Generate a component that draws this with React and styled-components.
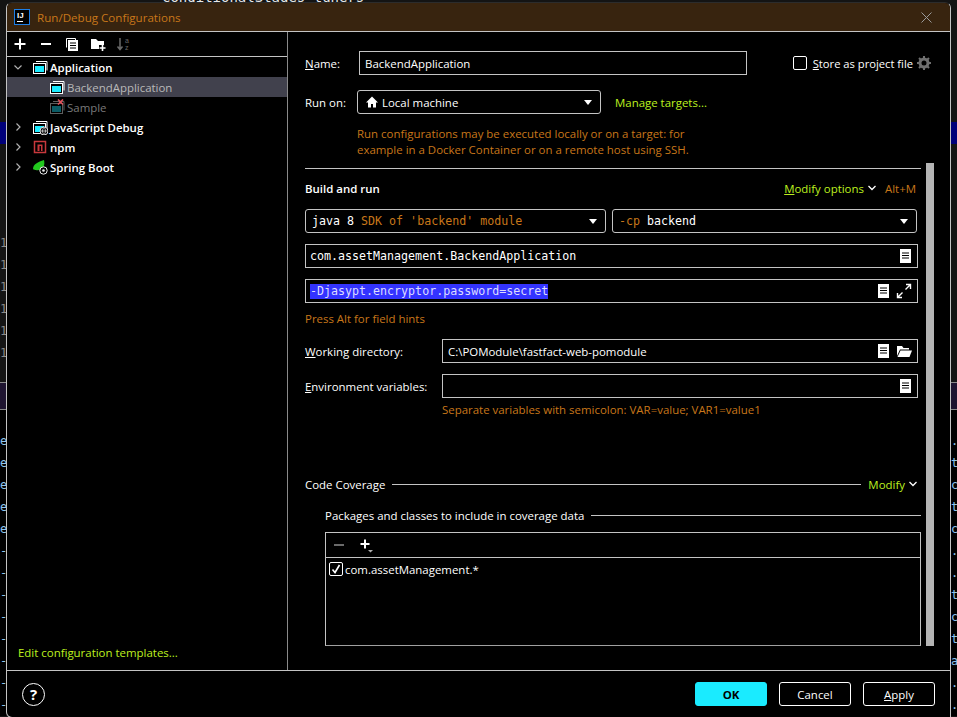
// App.jsx - Run/Debug Configurations dialog
import React from "react";
import styled, { createGlobalStyle } from "styled-components";

const colours = {
  orange: "#c8771a",
  green: "#bdf01f",
  cyan: "#1aebff",
  line: "#c4c4c4",
  dim: "#6f6f6f",
};

const GlobalStyle = createGlobalStyle`
  html, body {
    margin: 0;
    padding: 0;
    background: #000;
  }
  body {
    width: 957px;
    height: 717px;
    overflow: hidden;
    font-family: "Open Sans", "Liberation Sans", sans-serif;
    font-size: 11.45px;
    color: #fff;
  }
`;

const Screen = styled.div`
  position: relative;
  width: 957px;
  height: 717px;
  background: #141414;
  overflow: hidden;
`;

const Backdrop = styled.div`
  display: flex;
  justify-content: space-between;
  height: 100%;
`;

const EditorPeek = styled.div`
  position: absolute;
  left: 162px;
  top: -11px;
  font-family: "DejaVu Sans Mono", monospace;
  font-size: 14px;
  line-height: 16px;
  color: #e8e8e8;
`;

const Gutter = styled.div`
  width: 6px;
  height: 100%;
  display: flex;
  flex-direction: column;
  overflow: hidden;
  font-family: "DejaVu Sans Mono", monospace;
  font-size: 12px;
  color: #8fc4ee;
`;

const GutterSpacer = styled.div`
  height: ${(p) => p.$h}px;
  flex: none;
  background: ${(p) => p.$bg || "transparent"};
  border-top: ${(p) => (p.$rule ? "1px solid #8a8a8a" : "none")};
`;

const GutterLine = styled.div`
  height: 22px;
  line-height: 22px;
  flex: none;
  color: ${(p) => p.$color || "inherit"};
  background: ${(p) => p.$bg || "#000"};
  white-space: pre;
`;

const Dialog = styled.div`
  position: absolute;
  left: 6px;
  top: 2px;
  width: 945px;
  height: 716px;
  box-sizing: border-box;
  border: 1px solid ${colours.line};
  border-top: 1px solid #2c2c2c;
  border-radius: 6px 6px 0 6px;
  background: #000;
  display: flex;
  flex-direction: column;
  overflow: hidden;
`;

const TitleBar = styled.div`
  height: 29px;
  flex: none;
  box-sizing: border-box;
  display: flex;
  align-items: center;
  padding: 0 18px 0 7px;
  gap: 7px;
  background: #38240f;
  border-bottom: 1px solid ${colours.line};
  color: ${colours.orange};
  font-size: 11.6px;
`;

const TitleText = styled.span`
  flex: 1;
`;

const Body = styled.div`
  flex: 1;
  display: flex;
  min-height: 0;
`;

const Sidebar = styled.div`
  width: 281px;
  flex: none;
  box-sizing: border-box;
  border-right: 1px solid #8a8a8a;
  display: flex;
  flex-direction: column;
`;

const SideTools = styled.div`
  height: 25px;
  flex: none;
  box-sizing: border-box;
  display: flex;
  align-items: center;
  gap: 10px;
  padding: 0 5px;
  border-bottom: 1px solid ${colours.line};
`;

const ToolIcon = styled.svg`
  width: 16px;
  height: 16px;
  flex: none;
  display: block;
`;

const Tree = styled.div`
  flex: 1;
`;

const TreeRow = styled.div`
  height: 20px;
  display: flex;
  align-items: center;
  box-sizing: border-box;
  padding-left: ${(p) => (p.$child ? 42 : 5)}px;
  gap: 2px;
  background: ${(p) => (p.$selected ? "#41414d" : "transparent")};
  color: ${(p) => (p.$child ? (p.$faded ? "#7a7a7a" : "#b9b9b9") : "#fff")};
  font-weight: ${(p) => (p.$child ? 400 : 600)};
`;

const Chevron = styled.svg`
  width: 12px;
  height: 12px;
  flex: none;
  margin-right: 6px;
`;

const TreeIcon = styled.svg`
  width: 16px;
  height: 16px;
  flex: none;
`;

const TemplatesLink = styled.div`
  color: ${colours.green};
  padding: 0 0 10px 11px;
`;

const Main = styled.div`
  flex: 1;
  min-width: 0;
  box-sizing: border-box;
  padding-left: 17px;
  display: flex;
  flex-direction: column;
`;

const NameRow = styled.div`
  margin-top: 19px;
  height: 24px;
  display: flex;
  align-items: center;
`;

const RowLabel = styled.span`
  width: ${(p) => p.$width}px;
  flex: none;
`;

const Mnemonic = styled.span`
  text-decoration: underline;
`;

const Input = styled.div`
  width: ${(p) => p.$width}px;
  height: 24px;
  flex: none;
  box-sizing: border-box;
  display: flex;
  align-items: center;
  gap: 6px;
  padding: 0 5px 0 ${(p) => (p.$mono ? 4 : 5)}px;
  border: 1px solid ${colours.line};
  font-family: ${(p) => (p.$mono ? '"DejaVu Sans Mono", monospace' : "inherit")};
  font-size: ${(p) => (p.$mono ? "11.65px" : "11.45px")};
`;

const InputText = styled.span`
  flex: 1;
  white-space: nowrap;
`;

const Selected = styled.span`
  display: inline-block;
  line-height: 15px;
  background: #3333ff;
  color: #dcdcff;
`;

const StoreBox = styled.label`
  margin-left: auto;
  margin-right: 19px;
  display: flex;
  align-items: center;
  gap: 6px;
`;

const StoreLabel = styled.span`
  font-size: 11.2px;
`;

const GearIcon = styled.svg`
  width: 14px;
  height: 14px;
  flex: none;
  margin-left: -2px;
`;

const Checkbox = styled.span`
  width: 14px;
  height: 14px;
  flex: none;
  box-sizing: border-box;
  border: 1px solid #fff;
  border-radius: 2px;
  display: flex;
  align-items: center;
  justify-content: center;
`;

const RunRow = styled.div`
  margin-top: 15px;
  height: 24px;
  display: flex;
  align-items: center;
`;

const Select = styled.div`
  width: ${(p) => p.$width}px;
  height: 24px;
  flex: none;
  box-sizing: border-box;
  display: flex;
  align-items: center;
  gap: 3px;
  padding: 0 8px 0 ${(p) => p.$pad || 6}px;
  border: 1px solid ${colours.line};
  border-radius: 3px;
  font-family: ${(p) => (p.$mono ? '"DejaVu Sans Mono", monospace' : "inherit")};
  font-size: ${(p) => (p.$mono ? "11.65px" : "11.45px")};
`;

const Arrow = styled.span`
  margin-left: auto;
  width: 0;
  height: 0;
  border-left: 4px solid transparent;
  border-right: 4px solid transparent;
  border-top: 5px solid #fff;
`;

const Orange = styled.span`
  color: ${colours.orange};
`;

const GreenLink = styled.span`
  color: ${colours.green};
  margin-left: ${(p) => p.$left || 0}px;
`;

const HintBlock = styled.div`
  margin: 12px 0 0 52px;
  line-height: 16px;
  height: 37px;
  color: ${colours.orange};
`;

const ScrollArea = styled.div`
  height: 483px;
  flex: none;
  display: flex;
`;

const Form = styled.div`
  width: 616px;
  flex: none;
  padding-top: 5px;
`;

const Thumb = styled.div`
  width: 8px;
  margin-left: 5px;
  flex: none;
  background: #b4b4b4;
`;

const Rule = styled.div`
  height: 1px;
  background: ${colours.line};
`;

const BuildHead = styled.div`
  height: 24px;
  margin-top: 7px;
  display: flex;
  align-items: center;
  padding-right: 5px;
`;

const Strong = styled.span`
  font-weight: 600;
  margin-right: auto;
`;

const Caret = styled.svg`
  width: 10px;
  height: 10px;
  flex: none;
  margin: 0 ${(p) => p.$right || 0}px 0 ${(p) => p.$left || 0}px;
`;

const SelectRow = styled.div`
  margin-top: 9px;
  display: flex;
  gap: 6px;
`;

const FieldRow = styled.div`
  margin-top: ${(p) => p.$top}px;
  display: flex;
  align-items: center;
`;

const FieldHint = styled.div`
  height: 16px;
  line-height: 16px;
  margin-top: ${(p) => p.$top}px;
  margin-left: ${(p) => p.$left || 0}px;
  color: ${colours.orange};
`;

const SectionHead = styled.div`
  margin-top: ${(p) => p.$top}px;
  margin-left: ${(p) => p.$left || 0}px;
  padding-right: ${(p) => p.$right || 0}px;
  height: 16px;
  display: flex;
  align-items: center;
  gap: 7px;
`;

const SectionLine = styled.span`
  flex: 1;
  height: 1px;
  background: ${colours.line};
`;

const Table = styled.div`
  margin: 9px 0 0 20px;
  height: 114px;
  box-sizing: border-box;
  border: 1px solid ${colours.line};
  border-bottom-color: #a0a0a0;
`;

const TableTools = styled.div`
  height: 25px;
  box-sizing: border-box;
  display: flex;
  align-items: center;
  gap: 10px;
  padding-left: 5px;
  border-bottom: 1px solid ${colours.line};
`;

const TableRow = styled.div`
  height: 22px;
  display: flex;
  align-items: center;
  gap: 2px;
  padding-left: 3px;
`;

const Footer = styled.div`
  height: 47px;
  flex: none;
  box-sizing: border-box;
  display: flex;
  align-items: center;
  gap: 12px;
  padding: 0 15px;
  border-top: 1px solid ${colours.line};
`;

const Help = styled.div`
  width: 23px;
  height: 23px;
  box-sizing: border-box;
  border: 1px solid #fff;
  border-radius: 50%;
  margin-right: auto;
  display: flex;
  align-items: center;
  justify-content: center;
  font-weight: 700;
  font-size: 15px;
`;

const Button = styled.button`
  width: 72px;
  height: 24px;
  padding: 0;
  box-sizing: border-box;
  border: 1px solid ${(p) => (p.$primary ? colours.cyan : "#fff")};
  border-radius: 3px;
  background: ${(p) => (p.$primary ? colours.cyan : "#000")};
  color: ${(p) => (p.$primary ? "#000" : "#fff")};
  font: inherit;
  font-weight: ${(p) => (p.$primary ? 700 : 400)};
`;

function LogoIcon() {
  return (
    <svg width="16" height="16" viewBox="0 0 16 16">
      <rect x="0.5" y="0.5" width="15" height="15" fill="#000" stroke="#1e7fe6" />
      <text x="3" y="9" fill="#fff" fontSize="8" fontWeight="700" fontFamily="Liberation Sans">IJ</text>
      <rect x="3" y="12" width="6" height="1" fill="#fff" />
    </svg>
  );
}

function RunConfigIcon({ faded, overlay }) {
  const stroke = faded ? "#5e5e5e" : "#fff";
  const fill = faded ? "#0b5c66" : colours.cyan;
  return (
    <TreeIcon viewBox="0 0 16 16">
      <path d="M4 2.5h11v9" fill="none" stroke={stroke} />
      <rect x="1.5" y="4.5" width="12" height="10" fill="#000" stroke={stroke} />
      <rect x="3" y="7" width="9" height="6" fill={fill} />
      {faded && <path d="M9 0.5l5 5M14 0.5l-5 5" stroke="#e0505a" strokeWidth="1.6" />}
      {overlay === "globe" && (
        <g>
          <circle cx="12" cy="12" r="4" fill="#000" stroke="#ddd" />
          <path d="M8.5 12h7M12 8.5c-2 2-2 5 0 7M12 8.5c2 2 2 5 0 7" stroke="#ddd" strokeWidth="0.8" fill="none" />
        </g>
      )}
    </TreeIcon>
  );
}

function Doc() {
  return (
    <ToolIcon viewBox="0 0 16 16">
      <rect x="4" y="1" width="11" height="14" fill="#fff" />
      <path d="M6 5h7M6 7.5h7M6 10h7" stroke="#000" />
    </ToolIcon>
  );
}

function Chev({ open }) {
  return (
    <Chevron viewBox="0 0 12 12">
      <path d={open ? "M2.5 4.5L6 8l3.5-3.5" : "M4.5 2.5L8 6l-3.5 3.5"} fill="none" stroke="#b0b0b0" strokeWidth="1.2" />
    </Chevron>
  );
}

const caretPath = "M1.5 3L5 6.5 8.5 3";
const leftLower = ["e", "e", "e", "e", "e", "-", "-", "-", "-", "-", "-", "-", "-"];
const rightLower = [".", "t", "c", "t", "c", ".", ".", "t", "c", "t", "a", ".", "."];

export default function App() {
  return (
    <Screen>
      <GlobalStyle />
      <Backdrop>
        <Gutter>
          <GutterSpacer $h={122} />
          <GutterSpacer $h={22} $bg="#00007a" />
          <GutterSpacer $h={88} />
          {[0, 1, 2, 3, 4, 5].map((i) => (
            <GutterLine key={i} $color="#8a8a8a" $bg="#141414">1</GutterLine>
          ))}
          <GutterSpacer $h={18} />
          <GutterSpacer $h={26} $bg="#1e1430" $rule />
          <GutterSpacer $h={20} $bg="#000" $rule />
          {leftLower.map((c, i) => (
            <GutterLine key={i}>{c}</GutterLine>
          ))}
        </Gutter>
        <Gutter>
          <GutterSpacer $h={122} />
          <GutterSpacer $h={22} $bg="#00007a" />
          <GutterSpacer $h={238} />
          <GutterSpacer $h={26} $bg="#1e1430" $rule />
          <GutterSpacer $h={20} $bg="#000" $rule />
          {rightLower.map((c, i) => (
            <GutterLine key={i}>{c}</GutterLine>
          ))}
        </Gutter>
      </Backdrop>
      <EditorPeek>conditionalStages tuners</EditorPeek>

      <Dialog>
        <TitleBar>
          <LogoIcon />
          <TitleText>Run/Debug Configurations</TitleText>
          <svg width="11" height="11" viewBox="0 0 11 11">
            <path d="M0.5 0.5l10 10M10.5 0.5l-10 10" stroke="#9a9a9a" />
          </svg>
        </TitleBar>
        <Body>
          <Sidebar>
            <SideTools>
              <ToolIcon viewBox="0 0 16 16">
                <path d="M8 2.5v11M2.5 8h11" stroke="#fff" strokeWidth="2" />
              </ToolIcon>
              <ToolIcon viewBox="0 0 16 16">
                <path d="M3 8h10" stroke="#fff" strokeWidth="2" />
              </ToolIcon>
              <ToolIcon viewBox="0 0 16 16">
                <path d="M2.5 2.5h9v1.500M2.500 2.500v9" fill="none" stroke="#fff" />
                <rect x="4" y="4" width="10" height="11" fill="#fff" />
                <path d="M6 7h6M6 9.500h6M6 12h6" stroke="#000" />
              </ToolIcon>
              <ToolIcon viewBox="0 0 16 16">
                <path d="M1 3h5l2 2h6v4H9v4H1z" fill="#fff" />
                <path d="M12.5 9v6M9.5 12h6" stroke="#fff" strokeWidth="1.6" />
              </ToolIcon>
              <ToolIcon viewBox="0 0 16 16">
                <path d="M4 2v11M1.5 10.5L4 13.5l2.5-3" fill="none" stroke="#6a6a6a" strokeWidth="1.5" />
                <text x="9" y="7" fill="#6a6a6a" fontSize="7" fontFamily="Liberation Sans">a</text>
                <text x="9" y="14" fill="#6a6a6a" fontSize="7" fontFamily="Liberation Sans">z</text>
              </ToolIcon>
            </SideTools>
            <Tree>
              <TreeRow>
                <Chev open />
                <RunConfigIcon />
                Application
              </TreeRow>
              <TreeRow $child $selected>
                <RunConfigIcon />
                BackendApplication
              </TreeRow>
              <TreeRow $child $faded>
                <RunConfigIcon faded />
                Sample
              </TreeRow>
              <TreeRow>
                <Chev />
                <RunConfigIcon overlay="globe" />
                JavaScript Debug
              </TreeRow>
              <TreeRow>
                <Chev />
                <TreeIcon viewBox="0 0 16 16">
                  <rect x="2.5" y="2.5" width="11" height="11" fill="none" stroke="#c8383c" strokeWidth="1.5" />
                  <path d="M5.5 12V5.5h5V12H9V7H7.5v5z" fill="#c8383c" />
                </TreeIcon>
                npm
              </TreeRow>
              <TreeRow>
                <Chev />
                <TreeIcon viewBox="0 0 16 16">
                  <path d="M1 10C1 5 6 3 12 1c1 4 0 9-5 10-3 .5-5 0-6-1z" fill="#22c81e" />
                  <circle cx="11.5" cy="11.5" r="3.7" fill="#000" stroke="#eee" />
                  <circle cx="11.5" cy="11.5" r="1.3" fill="#eee" />
                </TreeIcon>
                Spring Boot
              </TreeRow>
            </Tree>
            <TemplatesLink>Edit configuration templates...</TemplatesLink>
          </Sidebar>

          <Main>
            <NameRow>
              <RowLabel $width={54}>
                <Mnemonic>N</Mnemonic>ame:
              </RowLabel>
              <Input $width={388}>
                <InputText>BackendApplication</InputText>
              </Input>
              <StoreBox>
                <Checkbox />
                <StoreLabel>
                  <Mnemonic>S</Mnemonic>tore as project file
                </StoreLabel>
                <GearIcon viewBox="0 0 14 14">
                  <circle cx="7" cy="7" r="4" fill="none" stroke="#6f6f6f" strokeWidth="3" />
                  <path d="M7 0v3M7 11v3M0 7h3M11 7h3M2 2l2 2M10 10l2 2M12 2l-2 2M4 10l-2 2" stroke="#6f6f6f" strokeWidth="2" />
                </GearIcon>
              </StoreBox>
            </NameRow>
            <RunRow>
              <RowLabel $width={52}>Run on:</RowLabel>
              <Select $width={244} $pad={7}>
                <svg width="14" height="14" viewBox="0 0 14 14">
                  <path d="M7 1.5L1 7.5h2v5h3V9h2v3.500h3v-5h2z" fill="#fff" />
                </svg>
                Local machine
                <Arrow />
              </Select>
              <GreenLink $left={14}>Manage targets...</GreenLink>
            </RunRow>
            <HintBlock>
              Run configurations may be executed locally or on a target: for
              <br />
              example in a Docker Container or on a remote host using SSH.
            </HintBlock>
            <ScrollArea>
              <Form>
                <Rule />
                <BuildHead>
                  <Strong>Build and run</Strong>
                  <GreenLink>
                    <Mnemonic>M</Mnemonic>odify options
                  </GreenLink>
                  <Caret viewBox="0 0 10 10" $left={3} $right={8}>
                    <path d={caretPath} fill="none" stroke="#fff" strokeWidth="1.3" />
                  </Caret>
                  <Orange>Alt+M</Orange>
                </BuildHead>
                <SelectRow>
                  <Select $width={301} $mono>
                    <span>java 8 <Orange>SDK of 'backend' module</Orange></span>
                    <Arrow />
                  </Select>
                  <Select $width={305} $mono>
                    <span><Orange>-cp</Orange> backend</span>
                    <Arrow />
                  </Select>
                </SelectRow>
                <FieldRow $top={11}>
                  <Input $width={613} $mono>
                    <InputText>com.assetManagement.BackendApplication</InputText>
                    <Doc />
                  </Input>
                </FieldRow>
                <FieldRow $top={11}>
                  <Input $width={613} $mono>
                    <InputText>
                      <Selected>-Djasypt.encryptor.password=secret</Selected>
                    </InputText>
                    <Doc />
                    <ToolIcon viewBox="0 0 16 16">
                      <path d="M9.5 6.5l5-5M10 1.5h4.5V6M6.5 9.5l-5 5M6 14.5H1.5V10" fill="none" stroke="#fff" strokeWidth="1.4" />
                    </ToolIcon>
                  </Input>
                </FieldRow>
                <FieldHint $top={8}>Press Alt for field hints</FieldHint>
                <FieldRow $top={12}>
                  <RowLabel $width={137}>
                    <Mnemonic>W</Mnemonic>orking directory:
                  </RowLabel>
                  <Input $width={476}>
                    <InputText>C:\POModule\fastfact-web-pomodule</InputText>
                    <Doc />
                    <ToolIcon viewBox="0 0 16 16">
                      <path d="M1 3h5l1.5 2H13v1.5H4L1 13z" fill="#fff" />
                      <path d="M4.5 7.5H16L13.5 14H1.5z" fill="#fff" />
                    </ToolIcon>
                  </Input>
                </FieldRow>
                <FieldRow $top={11}>
                  <RowLabel $width={137}>
                    <Mnemonic>E</Mnemonic>nvironment variables:
                  </RowLabel>
                  <Input $width={476}>
                    <InputText />
                    <Doc />
                  </Input>
                </FieldRow>
                <FieldHint $top={4} $left={137}>
                  Separate variables with semicolon: VAR=value; VAR1=value1
                </FieldHint>
                <SectionHead $top={58} $right={3}>
                  Code Coverage
                  <SectionLine />
                  <GreenLink>Modify</GreenLink>
                  <Caret viewBox="0 0 10 10" $left={-4}>
                    <path d={caretPath} fill="none" stroke="#fff" strokeWidth="1.3" />
                  </Caret>
                </SectionHead>
                <SectionHead $top={15} $left={20}>
                  Packages and classes to include in coverage data
                  <SectionLine />
                </SectionHead>
                <Table>
                  <TableTools>
                    <ToolIcon viewBox="0 0 16 16">
                      <path d="M3 8h10" stroke="#6a6a6a" strokeWidth="2" />
                    </ToolIcon>
                    <ToolIcon viewBox="0 0 16 16">
                      <path d="M8 2.5v9M3.5 7h9" stroke="#fff" strokeWidth="2" />
                      <path d="M11 13h5l-2.5 2.5z" fill="#b0b0b0" />
                    </ToolIcon>
                  </TableTools>
                  <TableRow>
                    <Checkbox>
                      <svg width="12" height="12" viewBox="0 0 12 12">
                        <path d="M2.5 6.5L5 9.5 9.5 2" fill="none" stroke="#fff" strokeWidth="1.6" />
                      </svg>
                    </Checkbox>
                    com.assetManagement.*
                  </TableRow>
                </Table>
              </Form>
              <Thumb />
            </ScrollArea>
          </Main>
        </Body>
        <Footer>
          <Help>?</Help>
          <Button $primary>OK</Button>
          <Button>Cancel</Button>
          <Button>
            <Mnemonic>A</Mnemonic>pply
          </Button>
        </Footer>
      </Dialog>
    </Screen>
  );
}
